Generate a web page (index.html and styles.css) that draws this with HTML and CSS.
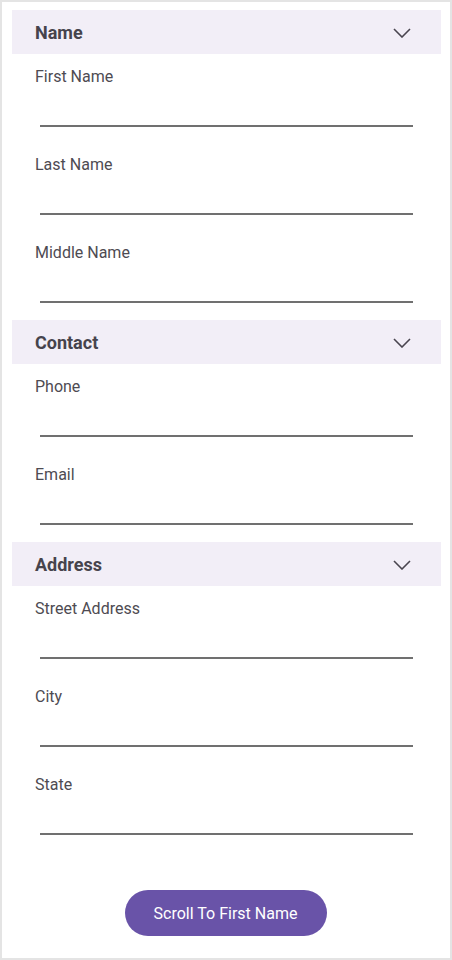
FILE: index.html
```html
<!DOCTYPE html>
<html>
<head>
<meta charset="utf-8">
<link rel="stylesheet" href="styles.css">
</head>
<body>
<div class="frame">
  <section class="section">
    <div class="header"><span class="title">Name</span>
      <svg class="chev" width="18" height="10" viewBox="0 0 18 10"><path d="M1 1 L9 9 L17 1" fill="none" stroke="#49454f" stroke-width="1.6"/></svg>
    </div>
    <div class="field"><div class="label">First Name</div><div class="input"></div></div>
    <div class="field"><div class="label">Last Name</div><div class="input"></div></div>
    <div class="field"><div class="label">Middle Name</div><div class="input"></div></div>
  </section>
  <section class="section">
    <div class="header"><span class="title">Contact</span>
      <svg class="chev" width="18" height="10" viewBox="0 0 18 10"><path d="M1 1 L9 9 L17 1" fill="none" stroke="#49454f" stroke-width="1.6"/></svg>
    </div>
    <div class="field"><div class="label">Phone</div><div class="input"></div></div>
    <div class="field"><div class="label">Email</div><div class="input"></div></div>
  </section>
  <section class="section">
    <div class="header"><span class="title">Address</span>
      <svg class="chev" width="18" height="10" viewBox="0 0 18 10"><path d="M1 1 L9 9 L17 1" fill="none" stroke="#49454f" stroke-width="1.6"/></svg>
    </div>
    <div class="field"><div class="label">Street Address</div><div class="input"></div></div>
    <div class="field"><div class="label">City</div><div class="input"></div></div>
    <div class="field"><div class="label">State</div><div class="input"></div></div>
  </section>
  <div class="actions"><button class="btn">Scroll To First Name</button></div>
</div>
</body>
</html>
```
FILE: styles.css
```css
* { box-sizing: border-box; }
html, body { margin: 0; padding: 0; background: #fff; }
body { font-family: Roboto, "Noto Sans", sans-serif; }
.frame {
  width: 452px;
  height: 960px;
  border: 2px solid #e4e4e4;
  padding: 8px 9px 0 10px;
  display: flex;
  flex-direction: column;
}
.section { display: flex; flex-direction: column; margin-bottom: 2px; }
.header {
  height: 44px;
  background: #f2eef7;
  display: flex;
  align-items: center;
  justify-content: space-between;
  padding: 0 30px 0 23px;
}
.title { font-weight: 700; font-size: 18px; color: #46434c; }
.chev { display: block; margin-top: 1px; }
.field { height: 88px; padding-top: 13px; }
.label { font-size: 16px; line-height: 20px; color: #4e4b52; padding-left: 23px; }
.input { height: 40px; margin: 0 28px; border-bottom: 2px solid #707070; }
.actions { display: flex; justify-content: center; margin-top: 38px; }
.btn {
  width: 202px;
  height: 46px;
  margin-left: -2px;
  border: none;
  border-radius: 23px;
  background: #6953a8;
  color: #fff;
  font-family: Roboto, sans-serif;
  font-size: 16px;
  padding: 0;
}
```
